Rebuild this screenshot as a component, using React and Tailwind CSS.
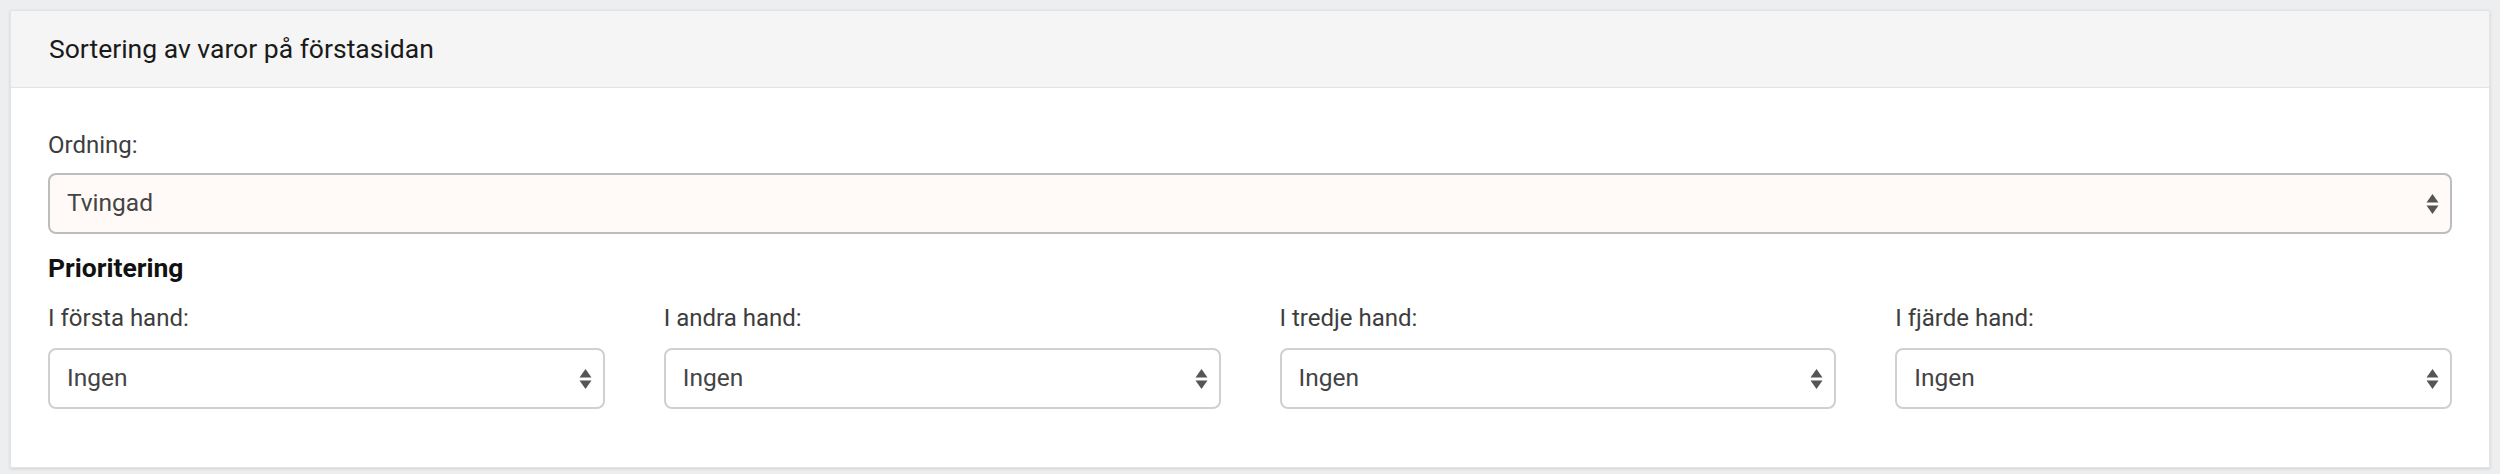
import { useState } from "react";

const priorities = [
  { id: "first", label: "I första hand:" },
  { id: "second", label: "I andra hand:" },
  { id: "third", label: "I tredje hand:" },
  { id: "fourth", label: "I fjärde hand:" },
];

// Up/down arrows shown at the right end of each select
const SortArrows = () => (
  <svg
    className="pointer-events-none absolute right-[13px] top-1/2 -translate-y-1/2"
    width="13"
    height="22"
    viewBox="0 0 13 22"
    fill="#555555"
  >
    <path d="M6.5 1 L12.5 9.5 L0.5 9.5 Z" />
    <path d="M0.5 12.5 L12.5 12.5 L6.5 21 Z" />
  </svg>
);

const Select = ({ value, onChange, options, tinted }) => (
  <div className="relative">
    <select
      value={value}
      onChange={(e) => onChange(e.target.value)}
      className={`block h-[61px] w-full appearance-none rounded-[8px] border-2 pl-[17px] pr-[40px] text-[24.5px] text-[#444444] outline-none ${
        tinted ? "border-[#bdbdbd] bg-[#fffaf7]" : "border-[#d0d0d0] bg-white"
      }`}
    >
      {options.map((o) => (
        <option key={o} value={o}>
          {o}
        </option>
      ))}
    </select>
    <SortArrows />
  </div>
);

const App = () => {
  const [order, setOrder] = useState("Tvingad");
  const [prio, setPrio] = useState({
    first: "Ingen",
    second: "Ingen",
    third: "Ingen",
    fourth: "Ingen",
  });

  const prioOptions = ["Ingen", "Namn", "Pris", "Datum"];

  return (
    <div
      className="min-h-[474px] bg-[#eceef0] px-[10px] pt-[10px]"
      style={{ fontFamily: "Roboto, 'Noto Sans', sans-serif" }}
    >
      <div className="border border-[#e4e4e4] bg-white shadow-[0_1px_3px_rgba(0,0,0,0.12)]">
        {/* Card header */}
        <div className="flex h-[77px] items-center border-b border-[#e2e2e2] bg-[#f5f5f5] px-[38px]">
          <h2 className="text-[26.5px] font-normal text-[#1a1a1a]">
            Sortering av varor på förstasidan
          </h2>
        </div>

        {/* Card body */}
        <div className="px-[37px] pt-[39px] pb-[58px]">
          <label className="mb-[10px] block text-[24px] leading-[36px] text-[#3d3d3d]">
            Ordning:
          </label>
          <Select
            value={order}
            onChange={setOrder}
            options={["Tvingad", "Senaste", "Populära"]}
            tinted
          />

          <h3 className="mt-[18px] text-[26.5px] font-bold leading-[31px] text-[#111111]">
            Prioritering
          </h3>

          <div className="mt-[17px] grid grid-cols-4 gap-x-[59px]">
            {priorities.map((p) => (
              <div key={p.id}>
                <label className="mb-[12px] block text-[24px] leading-[36px] text-[#3d3d3d]">
                  {p.label}
                </label>
                <Select
                  value={prio[p.id]}
                  onChange={(v) => setPrio({ ...prio, [p.id]: v })}
                  options={prioOptions}
                />
              </div>
            ))}
          </div>
        </div>
      </div>
    </div>
  );
};

export default App;
